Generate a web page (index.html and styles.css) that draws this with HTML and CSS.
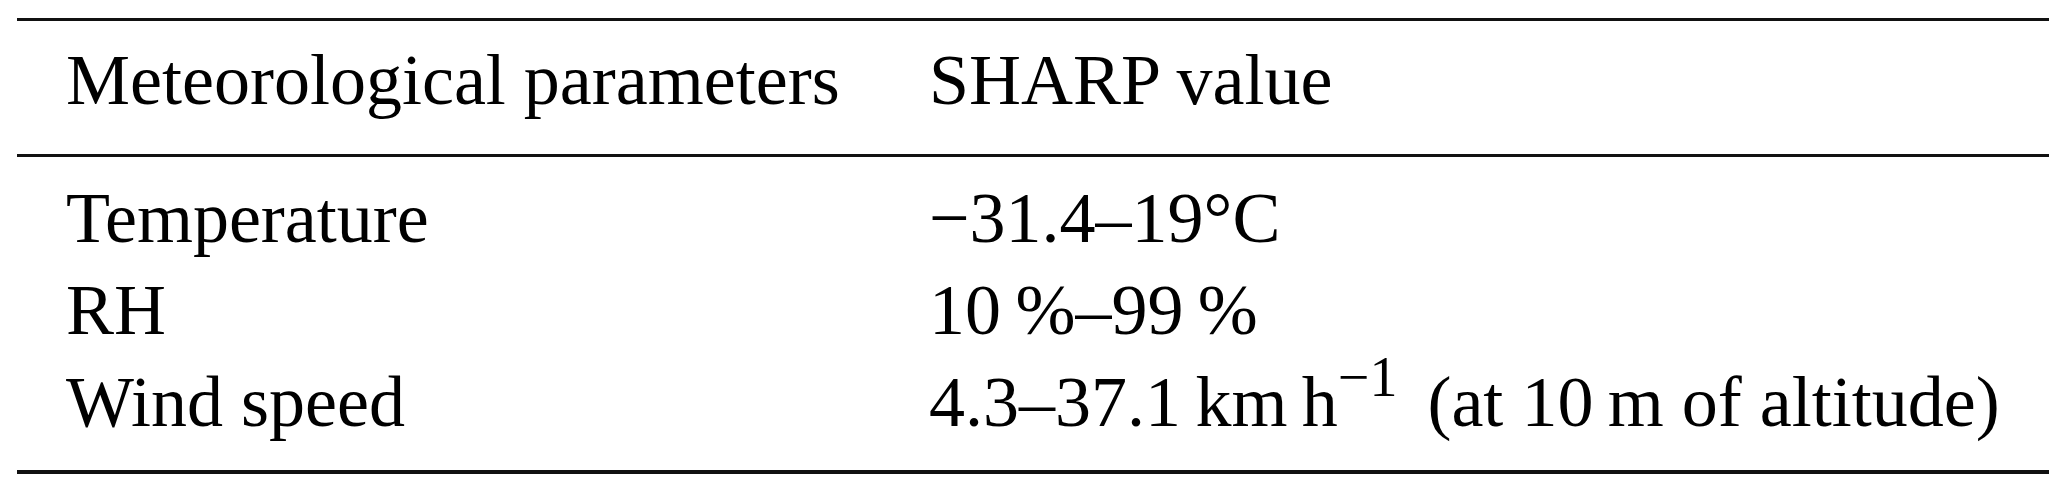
FILE: index.html
```html
<!DOCTYPE html>
<html lang="en">
<head>
    <meta charset="UTF-8">
    <meta name="viewport" content="width=device-width, initial-scale=1.0">
    <title>SHARP meteorological parameters</title>
    <link rel="stylesheet" href="styles.css">
</head>
<body>
    <table class="params">
        <colgroup>
            <col class="col-name">
            <col class="col-value">
        </colgroup>
        <thead>
            <tr>
                <th>Meteorological parameters</th>
                <th>SHARP value</th>
            </tr>
        </thead>
        <tbody>
            <tr class="first">
                <td>Temperature</td>
                <td>&minus;31.4&ndash;19&deg;C</td>
            </tr>
            <tr>
                <td>RH</td>
                <td>10&thinsp;%&ndash;99&thinsp;%</td>
            </tr>
            <tr class="last">
                <td>Wind speed</td>
                <td>4.3&ndash;37.1&thinsp;km&thinsp;h<sup>&minus;1</sup> (at 10&thinsp;m of altitude)</td>
            </tr>
        </tbody>
    </table>
</body>
</html>
```
FILE: styles.css
```css
body {
    margin: 0;
    padding: 18px 0 0 17px;
    background-color: #fff;
    color: #000;
    font-family: 'Liberation Serif', 'Times New Roman', serif;
}
.params {
    width: 2032px;
    border-collapse: collapse;
    table-layout: fixed;
    border-top: 3px solid #111;
    border-bottom: 4px solid #111;
    font-size: 72px;
    line-height: 92px;
}
.col-name {
    width: 912px;
}
.params th {
    font-weight: normal;
    text-align: left;
    padding-top: 13px;
    padding-bottom: 28px;
    border-bottom: 3px solid #111;
}
.params th,
.params td {
    white-space: nowrap;
    padding-left: 0;
    padding-right: 0;
}
.params td {
    padding-top: 0;
    padding-bottom: 0;
}
.params th:first-child,
.params td:first-child {
    padding-left: 49px;
}
.params tr.first td {
    padding-top: 15px;
}
.params tr.last td {
    padding-bottom: 22px;
}
.params tr.last td:last-child {
    line-height: 90px;
}
.params sup {
    font-size: 56px;
    line-height: 0;
    vertical-align: 30px;
    margin-right: 12px;
}
```
